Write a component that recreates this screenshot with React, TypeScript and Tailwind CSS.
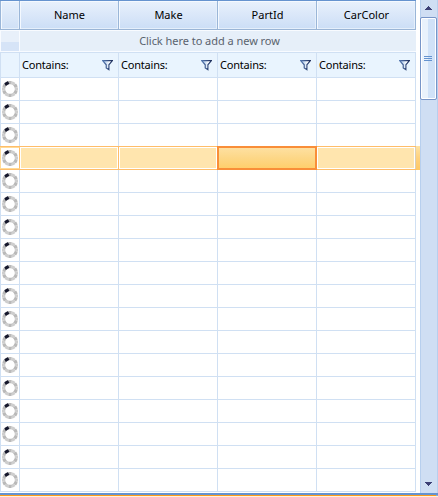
import React from "react";

const columns = ["Name", "Make", "PartId", "CarColor"];
const rows = Array.from({ length: 18 }, (_, i) => i);
const SELECTED = 3;

const segments = Array.from({ length: 12 }, (_, i) => ({
  angle: i * 30,
  dark: i === 11,
  fill: i === 11 ? "#15172b" : i % 2 === 1 ? "#cecece" : "#b9b9b9",
}));

function Spinner() {
  return (
    <svg width="18" height="18" viewBox="0 0 18 18" className="block shrink-0">
      {segments.map((s) => (
        <rect
          key={s.angle}
          x={s.dark ? 6.9 : 7.3}
          y={1}
          width={s.dark ? 4.2 : 3.4}
          height={3.3}
          rx={0.4}
          fill={s.fill}
          transform={`rotate(${s.angle} 9 9)`}
        />
      ))}
    </svg>
  );
}

function Funnel() {
  return (
    <svg width="11" height="11" viewBox="0 0 11 11" className="block shrink-0">
      <defs>
        <linearGradient id="funnel" x1="0" x2="1">
          <stop offset="0" stopColor="#8fb5e3" />
          <stop offset="0.7" stopColor="#ffffff" />
        </linearGradient>
        <linearGradient id="funnelEdge" x1="0" x2="1">
          <stop offset="0" stopColor="#5578b0" />
          <stop offset="1" stopColor="#1f2f5c" />
        </linearGradient>
      </defs>
      <path d="M0.6 0.6H10.4L6.9 4.8V9.6L4.2 7.9V4.8Z" fill="url(#funnel)" stroke="url(#funnelEdge)" strokeWidth="1.15" />
    </svg>
  );
}

function Header() {
  return (
    <div className="flex h-[30px] border-y border-t-[#6593cf] border-b-[#9ab5d6]">
      <div className="w-5 border-x border-[#9ab6d8] bg-linear-to-b from-[#e8f1fc] to-[#cfe0f6] shadow-[inset_1px_1px_0_#f4f9ff,inset_-1px_-1px_0_#e5effb]" />
      {columns.map((c) => (
        <div
          key={c}
          className="flex w-[99px] items-center justify-center border-r border-[#9ab6d8] bg-linear-to-b from-[#e8f1fc] via-[#dae7f9] to-[#cbdef6] pb-[2px] pl-px shadow-[inset_1px_1px_0_#f4f9ff,inset_-1px_-1px_0_#e5effb]"
        >
          {c}
        </div>
      ))}
    </div>
  );
}

function NewRow() {
  return (
    <div className="flex h-[23px] border-b border-[#d0e0f3] bg-[#e6eff9] shadow-[inset_0_1px_0_#f8fbff,inset_0_-1px_0_#f8fbff]">
      <div className="my-px w-5 border-x border-[#f8fbff] bg-linear-to-b from-[#e8f0fa] from-55% to-[#d6e4f7] to-55%" />
      <div className="flex flex-1 items-center justify-center pr-[17px] pb-[2px] tracking-[-0.04px] text-[#5a626e]">Click here to add a new row</div>
    </div>
  );
}

function FilterRow() {
  return (
    <div className="flex h-[25px] border-b border-[#d0e0f3] bg-[#e9f4fe]">
      <div className="w-5 border-x border-[#d0e0f3]" />
      {columns.map((c) => (
        <div key={c} className="flex w-[99px] items-center justify-between border-r border-[#d0e0f3] pt-px pr-[5px] pl-[2px]">
          <span className="pb-[2px] tracking-[-0.2px]">Contains:</span>
          <Funnel />
        </div>
      ))}
    </div>
  );
}

function Row({ index }: { index: number }) {
  const selected = index === SELECTED;
  if (selected) {
    return (
      <div className="-mt-px flex h-6 w-[420px] border-y border-[#ffbd69] bg-white">
        <div className="flex w-5 items-center justify-center border border-[#ffdb98] border-r-[#ffbd69] bg-white">
          <Spinner />
        </div>
        {columns.map((c, i) =>
          i === 2 ? (
            <div key={c} className="z-10 -my-px -ml-px w-[100px] border-2 border-[#f98e38] bg-linear-to-b from-[#fee0a0] via-[#fdd787] to-[#ffcf6c]" />
          ) : (
            <div key={c} className={`w-[99px] border-r p-px ${i === 3 ? "border-[#d9cdb8]" : "border-[#ffbd69]"}`}>
              <div className="h-full bg-[#ffe5ae]" />
            </div>
          ),
        )}
        <div className="-my-px w-1 bg-linear-to-b from-[#ffe3a3] via-[#ffd17d] to-[#ffc864]" />
      </div>
    );
  }
  return (
    <div className="flex h-[23px] border-b border-[#d0e0f3]">
      <div className="flex w-5 items-center justify-center border-x border-[#d0e0f3]">
        <Spinner />
      </div>
      {columns.map((c) => (
        <div key={c} className="w-[99px] border-r border-[#d0e0f3]" />
      ))}
    </div>
  );
}

function Scrollbar() {
  return (
    <div className="flex h-[493px] w-[18px] flex-col border-x border-[#b7cfee] bg-[#cfdef3]">
      <svg width="16" height="17" viewBox="0 0 16 17" className="block shrink-0" shapeRendering="crispEdges">
        <path d="M7 6h1v1h1v1h1v1h1v1H4V9h1V8h1V7h1Z" fill="#3c3f75" />
      </svg>
      <div className="-ml-px flex h-[83px] w-[17px] flex-col gap-px rounded-[2px] border border-[#7795c8] bg-linear-to-r from-[#e9f2fc] from-50% to-[#d0e2f8] to-50% pt-[38px] pl-[3px] shadow-[inset_0_0_0_1px_#fff]">
        <div className="h-px w-2 bg-[#6593cf]" />
        <div className="h-px w-2 bg-[#6593cf]" />
        <div className="h-px w-2 bg-[#6593cf]" />
      </div>
      <div className="flex-1" />
      <svg width="16" height="17" viewBox="0 0 16 17" className="block shrink-0" shapeRendering="crispEdges">
        <path d="M4 6h7v1h-1v1h-1v1H8v1H7V9H6V8H5V7H4Z" fill="#3c3f75" />
      </svg>
    </div>
  );
}

export default function App() {
  return (
    <div className="h-[497px] w-[438px] overflow-hidden bg-white font-['Noto_Sans','Open_Sans',sans-serif] text-[11px] leading-none text-black">
      <div className="flex h-[493px]">
        <div className="w-[420px]">
          <div className="w-[416px]">
            <Header />
            <NewRow />
            <FilterRow />
            {rows.map((i) => (
              <Row key={i} index={i} />
            ))}
          </div>
        </div>
        <Scrollbar />
      </div>
      <div className="h-0.5 bg-[#6593cf]" />
      <div className="flex h-px">
        <div className="w-[436px] bg-[#ff9b1a]" />
        <div className="w-0.5 bg-[#8ba9d2]" />
      </div>
      <div className="h-px bg-[#fff3dc]" />
    </div>
  );
}
